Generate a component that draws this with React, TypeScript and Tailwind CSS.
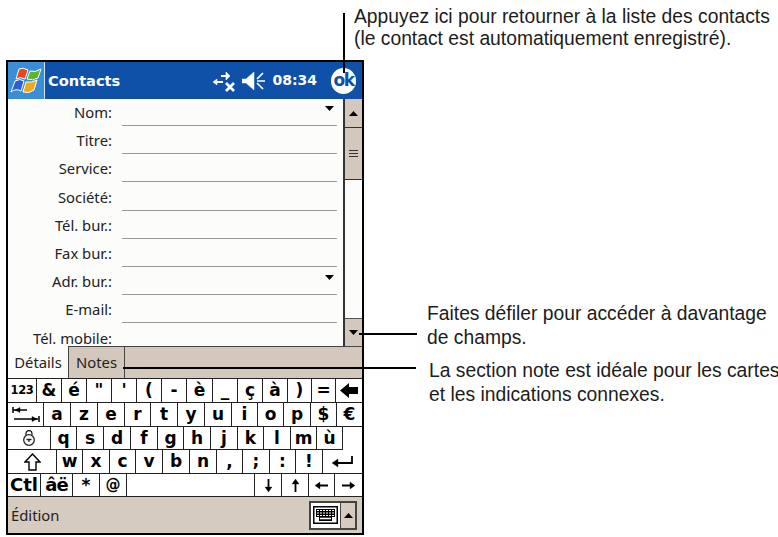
import React from "react";

const FIELDS = ["Nom:", "Titre:", "Service:", "Société:", "Tél. bur.:", "Fax bur.:", "Adr. bur.:", "E-mail:", "Tél. mobile:"];

const Tri = ({ up = false, className = "" }: { up?: boolean; className?: string }) => (
  <svg width="9" height="5" viewBox="0 0 9 5" className={className}>
    <path d={up ? "M4.5 0L9 5H0z" : "M0 0h9L4.5 5z"} fill="#000" />
  </svg>
);

const Flag = () => (
  <svg width="32" height="28" viewBox="0 0 32 28">
    <path d="M9 2 Q13 0 18 3 L15 12 Q10 9 6 12z" fill="#e8471f" stroke="#fff" strokeWidth="1" />
    <path d="M20 4 Q25 6 31 2 L28 11 Q23 14 17 12z" fill="#5fb52a" stroke="#fff" strokeWidth="1" />
    <path d="M5 14 Q10 11 14 14 L11 24 Q6 21 1 25z" fill="#2f5fd0" stroke="#fff" strokeWidth="1" />
    <path d="M16 15 Q22 16 27 13 L24 23 Q19 27 13 25z" fill="#f0a818" stroke="#fff" strokeWidth="1" />
  </svg>
);

const Net = () => (
  <svg width="24" height="22" viewBox="0 0 24 22" fill="none" stroke="#fff">
    <path d="M9 6h8" strokeWidth="2" />
    <path d="M14 2l4 4-4 4z" fill="#fff" strokeWidth="0.6" />
    <path d="M4 12h7" strokeWidth="2" />
    <path d="M5 9l-4 3 4 3z" fill="#fff" strokeWidth="0.6" />
    <path d="M14 13l8 8M22 13l-8 8" strokeWidth="2.6" />
  </svg>
);

const Speaker = () => (
  <svg width="24" height="20" viewBox="0 0 24 20" fill="none" stroke="#fff">
    <path d="M0 8h4l8-7v18l-8-7H0z" fill="#fff" strokeWidth="0.5" />
    <path d="M21 2l-6 6M15 10h8M21 18l-6-6" strokeWidth="1.7" />
  </svg>
);

const Backspace = () => (
  <svg width="19" height="15" viewBox="0 0 19 15"><path d="M0 7.5L9 0v4h9v7H9v4z" fill="#000" /></svg>
);
const TabIcon = () => (
  <svg width="28" height="17" viewBox="0 0 28 17" fill="none" stroke="#000">
    <path d="M1 1v6M1 4h14" strokeWidth="1.5" />
    <path d="M3 4L8 1.5v5z" fill="#000" strokeWidth="0.4" />
    <path d="M27 10v6M2 13h24" strokeWidth="1.5" />
    <path d="M25 13L20 10.5v5z" fill="#000" strokeWidth="0.4" />
  </svg>
);
const Lock = () => (
  <svg width="14" height="16" viewBox="0 0 14 16" fill="none" stroke="#222" strokeWidth="1.3">
    <path d="M4 5V3.5a3 3 0 0 1 6 0V5" />
    <circle cx="7" cy="10" r="5.3" />
    <path d="M4.5 9.5h5M7 9.5v2.5" />
  </svg>
);
const Shift = () => (
  <svg width="17" height="18" viewBox="0 0 17 18" fill="none" stroke="#000" strokeWidth="1.4">
    <path d="M8.5 1L16 9h-4v8H5V9H1z" />
  </svg>
);
const Enter = () => (
  <svg width="21" height="12" viewBox="0 0 21 12" fill="none" stroke="#000">
    <path d="M20 0v7H3" strokeWidth="1.8" />
    <path d="M0 7l6-4v8z" fill="#000" strokeWidth="0.3" />
  </svg>
);
const Arrow = ({ d }: { d: "u" | "d" | "l" | "r" }) => {
  const rot = d === "u" ? "rotate-0" : d === "d" ? "rotate-180" : d === "l" ? "-rotate-90" : "rotate-90";
  return (
    <svg width="13" height="13" viewBox="0 0 13 13" className={rot} fill="none" stroke="#000">
      <path d="M6.5 3v10" strokeWidth="1.8" />
      <path d="M6.5 0l3.5 5H3z" fill="#000" strokeWidth="0.3" />
    </svg>
  );
};
const KbIcon = () => (
  <svg width="25" height="18" viewBox="0 0 25 18">
    <rect x="0.75" y="0.75" width="23.5" height="16.5" fill="#fff" stroke="#000" strokeWidth="1.5" />
    <path d="M3 3h19v8h-3v4H6v-4H3z" fill="#000" />
    <path d="M4 4.5h17M4 7h17M4 9.5h17" stroke="#fff" strokeWidth="1" strokeDasharray="2 1" fill="none" />
    <path d="M7 12.5h11" stroke="#fff" strokeWidth="1.6" fill="none" />
  </svg>
);

type K = { c: React.ReactNode; w: string; cls: string };
const t = (c: React.ReactNode, w: string, cls = "text-[17px]"): K => ({ c, w, cls });

const ROW1: K[] = [
  t("123", "w-[29px]", "text-[11.5px] tracking-[-0.3px]"), t("&", "w-[25px]"), t("é", "w-[25px]"), t('"', "w-[25px]"), t("'", "w-[25px]"),
  t("(", "w-[25px]"), t("-", "w-[25px]"), t("è", "w-[26px]"), t("_", "w-[25px]"), t("ç", "w-[25px]"), t("à", "w-[25px]"), t(")", "w-[24px]"),
  t("=", "w-[24px]"), t(<Backspace />, "w-[26px]"),
];
const ROW2: K[] = [
  t(<TabIcon />, "w-[36px]"), t("a", "w-[27px]"), t("z", "w-[27px]"), t("e", "w-[27px]"), t("r", "w-[26px]"), t("t", "w-[27px]"), t("y", "w-[27px]"),
  t("u", "w-[27px]"), t("i", "w-[26px]"), t("o", "w-[26px]"), t("p", "w-[27px]"), t("$", "w-[26px]"), t("€", "w-[25px]"),
];
const ROW3: K[] = [
  t(<Lock />, "w-[43px]"), t("q", "w-[26px]"), t("s", "w-[27px]"), t("d", "w-[27px]"), t("f", "w-[27px]"), t("g", "w-[26px]"), t("h", "w-[27px]"),
  t("j", "w-[27px]"), t("k", "w-[26px]"), t("l", "w-[27px]"), t("m", "w-[26px]"), t("ù", "w-[26px]"), t("", "w-[19px]", "border-b-white"),
];
const ROW4: K[] = [
  t(<Shift />, "w-[49px]"), t("w", "w-[26px]"), t("x", "w-[27px]"), t("c", "w-[26px]"), t("v", "w-[27px]"), t("b", "w-[27px]"), t("n", "w-[27px]"),
  t(",", "w-[26px]"), t(";", "w-[27px]"), t(":", "w-[26px]"), t("!", "w-[27px]"), t(<Enter />, "w-[39px]"),
];
const ROW5: K[] = [
  t("Ctl", "w-[33px]", "text-[18px]"), t("âë", "w-[32px]", "text-[18px] tracking-[-1px]"), t("*", "w-[27px]"), t("@", "w-[27px]", "text-[15px]"), t("", "w-[128px]"),
  t(<Arrow d="d" />, "w-[27px]"), t(<Arrow d="u" />, "w-[27px]"), t(<Arrow d="l" />, "w-[26px]"), t(<Arrow d="r" />, "w-[27px]"),
];

const Row = ({ keys, h }: { keys: K[]; h: string }) => (
  <div className={`flex ${h}`}>
    {keys.map((k, i) => (
      <div
        key={i}
        className={`${k.w} ${k.cls} flex items-center justify-center border-r border-b border-[#222] last:border-r-0 font-bold leading-none text-black`}
      >
        {k.c}
      </div>
    ))}
  </div>
);

export default function App() {
  return (
    <div className="relative grid w-[778px] h-[537px] grid-cols-[354px_1fr] bg-white font-['Liberation_Sans',Arial,sans-serif] text-[19.3px] text-[#1c1c1c]">
      <div className="pl-[6px] pt-[60px]">
        <div className="relative flex h-[475px] w-[358px] flex-col border-2 border-black bg-white font-['Noto_Sans',sans-serif] text-[14.8px]">
          {/* Title bar */}
          <div className="flex h-[37px] shrink-0 items-center bg-[#0f50a9] text-white">
            <div className="flex h-full w-[37px] items-center justify-center border-r border-[#cfe3f5] bg-[#3a8ed6]">
              <Flag />
            </div>
            <span className="ml-[3px] font-['DejaVu_Sans',sans-serif] text-[14.6px] font-bold">Contacts</span>
            <div className="ml-auto flex items-center">
              <Net />
              <span className="ml-[6px] flex"><Speaker /></span>
              <span className="ml-[6px] font-['DejaVu_Sans',sans-serif] text-[14px] font-bold">08:34</span>
              <div className="ml-[14px] mr-[6px] flex h-[26px] w-[25px] items-center justify-center rounded-full bg-white font-['DejaVu_Sans',sans-serif] text-[17px] font-bold leading-none tracking-[-1.5px] text-[#0f50a9]">
                ok
              </div>
            </div>
          </div>

          {/* Form + scrollbar */}
          <div className="flex h-[247px] shrink-0 overflow-hidden">
            <div className="flex min-w-0 flex-1 flex-col bg-[#fcfdfb]">
              {FIELDS.map((f, i) => (
                <div key={f} className="relative flex h-[28.2px] shrink-0 items-start">
                  <span className="mt-[6px] w-[104px] text-right leading-[15px] text-[#222]">{f}</span>
                  <div className="ml-[10px] mt-[26px] h-[1px] w-[215px] bg-[#9a9a92]" />
                  {(i === 0 || i === 6) && <Tri className="absolute left-[317px] top-[7px]" />}
                </div>
              ))}
            </div>
            <div className="flex w-[19px] shrink-0 flex-col border-l-2 border-[#333]">
              <div className="flex h-[28px] items-center justify-center bg-[#d4c8bc]"><Tri up /></div>
              <div className="flex h-[53px] flex-col items-center justify-center gap-[2px] border-y border-[#333] bg-[#d4c8bc]">
                <div className="h-[1px] w-[9px] bg-[#333]" />
                <div className="h-[1px] w-[9px] bg-[#333]" />
                <div className="h-[1px] w-[9px] bg-[#333]" />
              </div>
              <div className="flex-1 bg-[#fcfdfb]" />
              <div className="flex h-[28px] items-center justify-center border-t border-[#555] bg-[#d4c8bc]"><Tri /></div>
            </div>
          </div>

          {/* Tabs */}
          <div className="flex h-[32px] shrink-0">
            <div className="flex w-[60px] items-center justify-center bg-[#fcfdfb] text-[#222]">Détails</div>
            <div className="flex flex-1 border-t border-[#444] bg-[#d4c8bc]">
              <div className="flex w-[57px] items-center justify-center border-x border-[#444] text-[#222]">Notes</div>
            </div>
          </div>

          {/* Keyboard */}
          <div className="flex shrink-0 flex-col border-t border-[#222] bg-white font-['DejaVu_Sans',sans-serif]">
            <Row keys={ROW1} h="h-[24px]" />
            <Row keys={ROW2} h="h-[24px]" />
            <Row keys={ROW3} h="h-[23px]" />
            <Row keys={ROW4} h="h-[24px]" />
            <Row keys={ROW5} h="h-[23px]" />
          </div>

          {/* Bottom bar */}
          <div className="flex flex-1 items-center bg-[#d6cbbf] pl-[3px] text-[#222]">
            <span>Édition</span>
            <div className="ml-auto mr-[5px] flex h-[29px] border-2 border-[#444]">
              <div className="flex w-[29px] items-center justify-center bg-white"><KbIcon /></div>
              <div className="flex w-[15px] items-center justify-center border-l border-[#444]"><Tri up /></div>
            </div>
          </div>
        </div>
      </div>

      {/* Annotations */}
      <div className="flex flex-col">
        <p className="mt-[6px] whitespace-nowrap leading-[22px]">
          Appuyez ici pour retourner à la liste des contacts
          <br />
          (le contact est automatiquement enregistré).
        </p>
        <p className="ml-[73px] mt-[252px] whitespace-nowrap leading-[23.5px]">
          Faites défiler pour accéder à davantage
          <br />
          de champs.
        </p>
        <p className="ml-[75px] mt-[10px] whitespace-nowrap leading-[23.5px]">
          La section note est idéale pour les cartes
          <br />
          et les indications connexes.
        </p>
      </div>

      {/* Leader lines */}
      <div className="absolute left-[343px] top-[13px] h-[60px] w-[2px] bg-black" />
      <div className="absolute left-[359px] top-[333px] h-[2px] w-[58px] bg-black" />
      <div className="absolute left-[123px] top-[367px] h-[2px] w-[293px] bg-black" />
    </div>
  );
}
